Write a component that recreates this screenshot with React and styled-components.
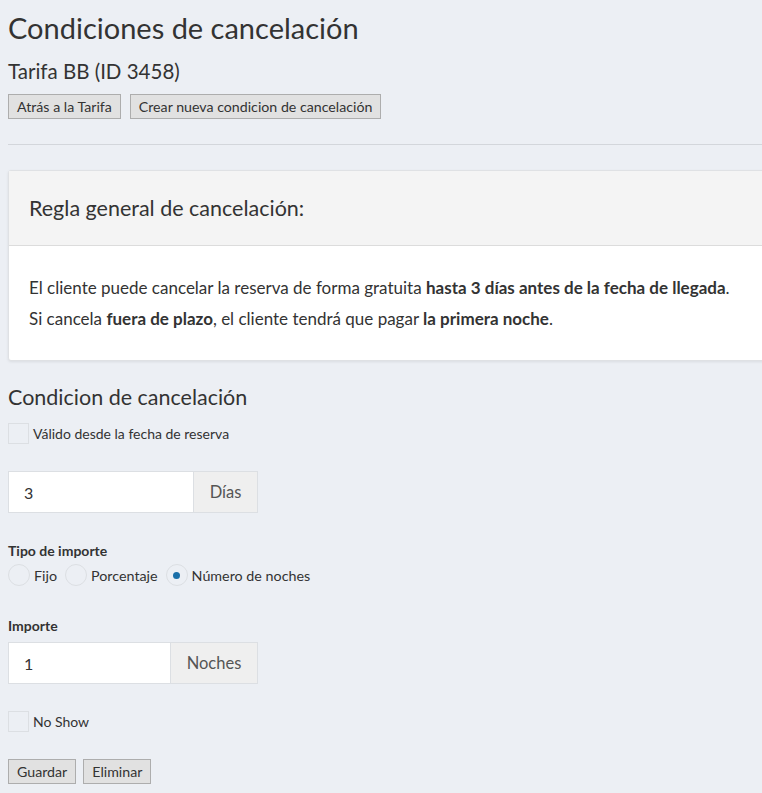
import React from "react";
import styled, { createGlobalStyle } from "styled-components";

const Global = createGlobalStyle`
  html, body { margin: 0; padding: 0; overflow-x: hidden; }
  body {
    background: #eceff4;
    font-family: Lato, "Open Sans", sans-serif;
    color: #333;
  }
`;

const Page = styled.div`
  padding: 0 0 10px 8px;
`;

const Title = styled.h1`
  margin: 0;
  padding-top: 11px;
  font-size: 29px;
  font-weight: 400;
  line-height: 34px;
`;

const Subtitle = styled.h3`
  margin: 14px 0 0 0;
  font-size: 20.5px;
  font-weight: 400;
  line-height: 24px;
`;

const ButtonRow = styled.div`
  display: flex;
  gap: ${(p) => p.$gap || 9}px;
  margin-top: ${(p) => p.$top || 0}px;
`;

const Button = styled.button`
  font-family: inherit;
  font-size: 14.2px;
  color: #333;
  background: #e1e1e1;
  border: 1px solid #adadad;
  border-radius: 0;
  height: 25px;
  padding: 0 8px;
  line-height: 23px;
`;

const Rule = styled.hr`
  border: 0;
  border-top: 1px solid #d3d6db;
  margin: 25px -40px 25px 0;
`;

const Card = styled.div`
  margin-right: -40px;
  background: #fff;
  border: 1px solid #dfe1e4;
  border-radius: 3px;
  box-shadow: 0 1px 3px rgba(0, 0, 0, 0.08);
`;

const CardHeader = styled.div`
  background: #f4f4f4;
  border-bottom: 1px solid #dcdcdc;
  height: 74px;
  display: flex;
  align-items: center;
  padding-left: 20px;
  font-size: 21.5px;
`;

const CardBody = styled.div`
  padding: 26px 20px 26px 20px;
  font-size: 17px;
  line-height: 31px;
  b { font-weight: 700; }
`;

const SectionTitle = styled.h3`
  margin: 23px 0 0 0;
  font-size: 21.5px;
  font-weight: 400;
  line-height: 26px;
`;

const CheckRow = styled.label`
  display: flex;
  align-items: center;
  gap: 4px;
  font-size: 14px;
  margin-top: ${(p) => p.$top || 0}px;
`;

const Box = styled.span`
  width: 21px;
  height: 21px;
  border: 1px solid #dcdfe3;
  background: #eceff4;
  box-sizing: border-box;
  display: inline-block;
`;

const InputGroup = styled.div`
  display: flex;
  width: 250px;
  height: 42px;
  margin-top: ${(p) => p.$top || 0}px;
`;

const Input = styled.div`
  flex: 1;
  background: #fff;
  border: 1px solid #dcdfe3;
  border-right: 0;
  display: flex;
  align-items: center;
  padding-left: 15px;
  font-size: 16px;
`;

const Addon = styled.div`
  width: ${(p) => p.$w}px;
  background: #efefef;
  border: 1px solid #dcdfe3;
  display: flex;
  align-items: center;
  justify-content: center;
  font-size: 16.5px;
  color: #555;
`;

const Label = styled.div`
  font-size: 14px;
  font-weight: 700;
  margin-top: ${(p) => p.$top || 0}px;
`;

const RadioRow = styled.div`
  display: flex;
  align-items: center;
  margin-top: 5px;
  font-size: 14.3px;
`;

const RadioItem = styled.label`
  display: flex;
  align-items: center;
  gap: 4px;
  margin-right: 8px;
`;

const Circle = styled.span`
  width: 22px;
  height: 22px;
  border-radius: 50%;
  border: 1px solid #dcdfe3;
  box-sizing: border-box;
  display: inline-flex;
  align-items: center;
  justify-content: center;
  &::after {
    content: "";
    width: 7px;
    height: 7px;
    border-radius: 50%;
    background: ${(p) => (p.$on ? "#1a6fa8" : "transparent")};
  }
`;

export default function App() {
  return (
    <>
      <Global />
      <Page>
        <Title>Condiciones de cancelación</Title>
        <Subtitle>Tarifa BB (ID 3458)</Subtitle>
        <ButtonRow $top={11}>
          <Button>Atrás a la Tarifa</Button>
          <Button>Crear nueva condicion de cancelación</Button>
        </ButtonRow>
        <Rule />
        <Card>
          <CardHeader>Regla general de cancelación:</CardHeader>
          <CardBody>
            <div>
              El cliente puede cancelar la reserva de forma gratuita{" "}
              <b>hasta 3 días antes de la fecha de llegada</b>.
            </div>
            <div>
              Si cancela <b>fuera de plazo</b>, el cliente tendrá que pagar{" "}
              <b>la primera noche</b>.
            </div>
          </CardBody>
        </Card>
        <SectionTitle>Condicion de cancelación</SectionTitle>
        <CheckRow $top={13}>
          <Box />
          Válido desde la fecha de reserva
        </CheckRow>
        <InputGroup $top={27}>
          <Input>3</Input>
          <Addon $w={63}>Días</Addon>
        </InputGroup>
        <Label $top={29}>Tipo de importe</Label>
        <RadioRow>
          <RadioItem><Circle />Fijo</RadioItem>
          <RadioItem><Circle />Porcentaje</RadioItem>
          <RadioItem><Circle $on />Número de noches</RadioItem>
        </RadioRow>
        <Label $top={31}>Importe</Label>
        <InputGroup $top={8}>
          <Input>1</Input>
          <Addon $w={86}>Noches</Addon>
        </InputGroup>
        <CheckRow $top={27}>
          <Box />
          No Show
        </CheckRow>
        <ButtonRow $top={27} $gap={7}>
          <Button>Guardar</Button>
          <Button>Eliminar</Button>
        </ButtonRow>
      </Page>
    </>
  );
}
